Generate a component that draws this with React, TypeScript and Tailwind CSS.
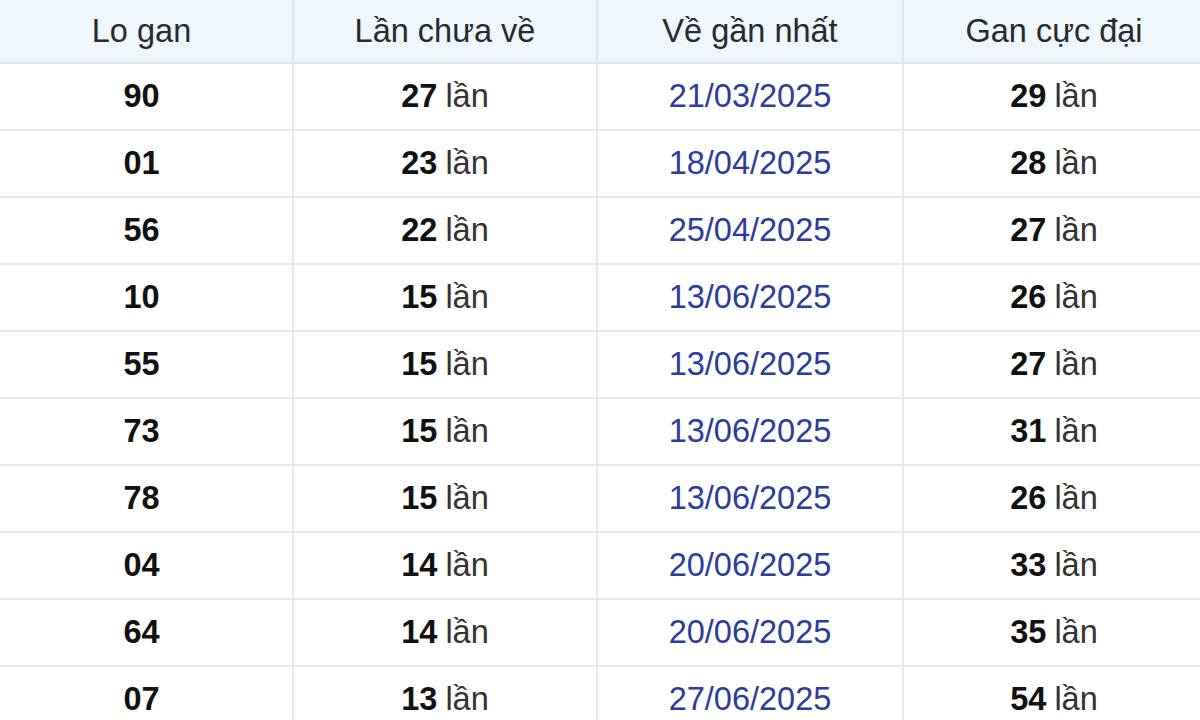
import React from "react";

type Row = { lo: string; chua: number; date: string; max: number };

const rows: Row[] = [
  { lo: "90", chua: 27, date: "21/03/2025", max: 29 },
  { lo: "01", chua: 23, date: "18/04/2025", max: 28 },
  { lo: "56", chua: 22, date: "25/04/2025", max: 27 },
  { lo: "10", chua: 15, date: "13/06/2025", max: 26 },
  { lo: "55", chua: 15, date: "13/06/2025", max: 27 },
  { lo: "73", chua: 15, date: "13/06/2025", max: 31 },
  { lo: "78", chua: 15, date: "13/06/2025", max: 26 },
  { lo: "04", chua: 14, date: "20/06/2025", max: 33 },
  { lo: "64", chua: 14, date: "20/06/2025", max: 35 },
  { lo: "07", chua: 13, date: "27/06/2025", max: 54 },
];

// widths include the 2px right border (border-box)
const cols = ["w-[303px]", "w-[304px]", "w-[306px]", "w-[300px]"];

export default function App() {
  return (
    <div
      className="w-[1200px] h-[720px] overflow-hidden bg-white text-[32.5px] text-[#333]"
      style={{ fontFamily: '"Liberation Sans", Arial, sans-serif' }}
    >
      <div className="ml-[-9px] w-[1213px]">
        <div className="flex h-[64px] bg-[#eef6fe] border-b-2 border-[#e1e4e9]">
          {["Lo gan", "Lần chưa về", "Về gần nhất", "Gan cực đại"].map((h, i) => (
            <div
              key={h}
              className={`${cols[i]} shrink-0 flex items-center justify-center text-[#2a2a2a] ${i < 3 ? "border-r-2 border-[#e1e4e9]" : ""}`}
            >
              {h}
            </div>
          ))}
        </div>
        {rows.map((r, idx) => (
          <div key={idx} className="flex h-[67px] border-b-2 border-[#e6e8ec]">
            <div className={`${cols[0]} shrink-0 flex items-center justify-center font-bold text-[#111] border-r-2 border-[#e6e8ec]`}>
              {r.lo}
            </div>
            <div className={`${cols[1]} shrink-0 flex items-center justify-center border-r-2 border-[#e6e8ec]`}>
              <b className="text-[#111] mr-[8px]">{r.chua}</b>lần
            </div>
            <div className={`${cols[2]} shrink-0 flex items-center justify-center text-[#2b3c9e] border-r-2 border-[#e6e8ec]`}>
              {r.date}
            </div>
            <div className={`${cols[3]} shrink-0 flex items-center justify-center`}>
              <b className="text-[#111] mr-[8px]">{r.max}</b>lần
            </div>
          </div>
        ))}
      </div>
    </div>
  );
}
